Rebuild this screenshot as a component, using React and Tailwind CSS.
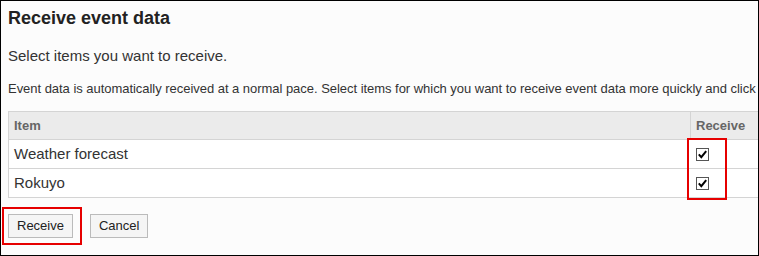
const rows = ["Weather forecast", "Rokuyo"];

const Check = () => (
  <svg width="13" height="13" viewBox="0 0 13 13" className="block">
    <rect x="0.5" y="0.5" width="12" height="12" fill="#fff" stroke="#555" />
    <path d="M2.8 6.4 L5.3 9.2 L10.2 3.2" fill="none" stroke="#000" strokeWidth="2" />
  </svg>
);

export default function App() {
  return (
    <div className="relative w-[759px] h-[256px] overflow-hidden border border-black bg-[#fcfcfc] font-['Liberation_Sans',Arial,sans-serif] text-[#333]">
      <div className="pl-[7px] pt-[7px]">
        <h1 className="text-[18px] leading-[20px] font-bold text-[#222] whitespace-nowrap">Receive event data</h1>
        <p className="mt-[18px] text-[15px] leading-[20px] whitespace-nowrap">Select items you want to receive.</p>
        <p className="mt-[14px] text-[13px] leading-[18px] tracking-[-0.035px] whitespace-nowrap">
          Event data is automatically received at a normal pace. Select items for which you want to receive event data more quickly and click
        </p>

        <div className="mt-[13px] w-[820px] border-l border-t border-[#d4d4d4] bg-white">
          <div className="flex h-[28px] border-b border-[#d4d4d4] bg-[#ebebeb] text-[13px] font-bold text-[#666]">
            <div className="w-[681px] flex items-center pl-[5px]">Item</div>
            <div className="flex-1 flex items-center border-l border-[#d4d4d4] pl-[5px]">Receive</div>
          </div>
          {rows.map((r) => (
            <div key={r} className="flex h-[29px] border-b border-[#d4d4d4] text-[15px]">
              <div className="w-[681px] flex items-center pl-[5px]">{r}</div>
              <div className="flex-1 flex items-center pl-[6px]">
                <Check />
              </div>
            </div>
          ))}
        </div>

        <div className="mt-[16px] flex gap-[17px]">
          <button className="h-[24px] px-[8px] border border-[#bbb] bg-[#f5f5f5] text-[13px] text-[#222]">Receive</button>
          <button className="h-[24px] px-[8px] border border-[#bbb] bg-[#f5f5f5] text-[13px] text-[#222]">Cancel</button>
        </div>
      </div>

      <div className="absolute left-[1px] top-[206px] w-[80px] h-[38px] border-2 border-[#e60000]" />
      <div className="absolute left-[686px] top-[137px] w-[40px] h-[62px] border-2 border-[#e60000]" />
    </div>
  );
}
